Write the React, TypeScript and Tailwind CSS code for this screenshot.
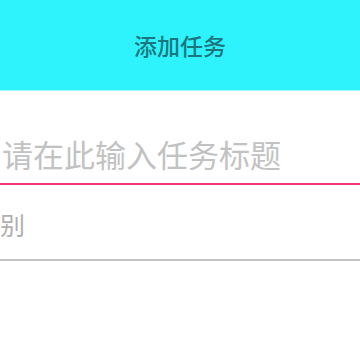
export default function App() {
  return (
    <div className="w-[360px] h-[360px] overflow-hidden bg-white font-['Noto_Sans_CJK_SC',sans-serif]">
      <header className="h-[91px] bg-[#2ef3fd] flex items-center justify-center border-b border-[#9ef8fd]">
        <h1 className="text-[23px] font-medium text-[#1a767c] leading-none">添加任务</h1>
      </header>

      <div className="pt-[44px]">
        <div className="border-b-2 border-[#f2387a] pb-[10px]">
          <input
            className="w-full pl-[2px] text-[31px] leading-[38px] outline-none placeholder:text-[#c2c2c2] bg-transparent"
            placeholder="请在此输入任务标题"
          />
        </div>
      </div>

      <div className="pt-[23px]">
        <div className="border-b-2 border-[#c4c4c4] pb-[19px]">
          <span className="block text-[25px] leading-[32px] text-[#b0b0b0]">别</span>
        </div>
      </div>
    </div>
  );
}
